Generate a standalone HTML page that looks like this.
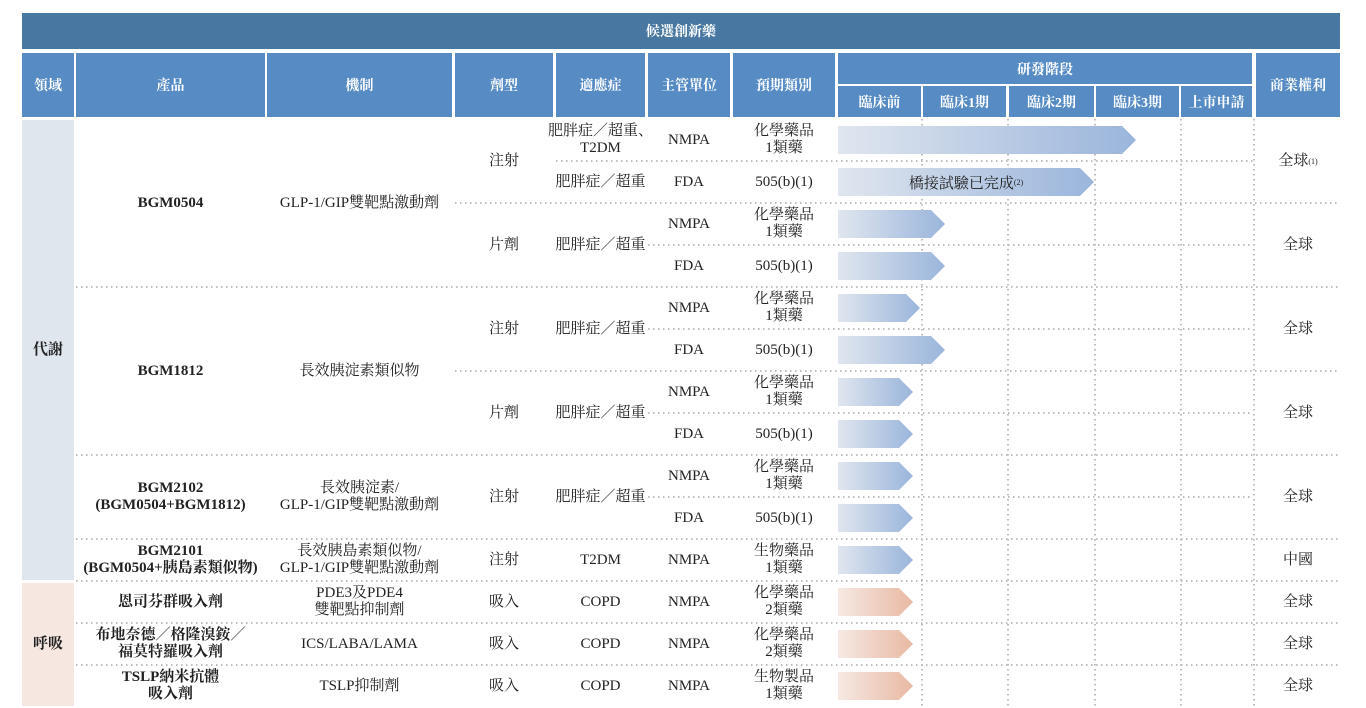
<!DOCTYPE html>
<html><head><meta charset="utf-8"><style>
*{margin:0;padding:0;box-sizing:border-box}
body{width:1366px;height:708px;background:#fff;position:relative;overflow:hidden;font-family:"Liberation Serif","Noto Serif CJK SC",serif;font-size:15px;color:#222}
.h{position:absolute;background:#568bc4;color:#fff;font-weight:bold;display:flex;align-items:center;justify-content:center;text-align:center;font-size:14px}
.c{position:absolute;display:flex;align-items:center;justify-content:center;text-align:center;line-height:17px}
.b{font-weight:bold}
.hl{position:absolute;height:1.5px;background:repeating-linear-gradient(90deg,#bdbdbd 0 1.5px,transparent 1.5px 5px)}
.vl{position:absolute;width:1.5px;background:repeating-linear-gradient(180deg,#bdbdbd 0 1.5px,transparent 1.5px 5px)}
.ar{position:absolute;height:28px;clip-path:polygon(0 0,calc(100% - 14px) 0,100% 50%,calc(100% - 14px) 100%,0 100%);background:linear-gradient(90deg,#e0e6ef,#9ab5db);display:flex;align-items:center;justify-content:center;font-size:15px}
.or{background:linear-gradient(90deg,#f6e9e3,#e8b9a3)}
</style></head><body>
<div class="h" style="left:22px;top:13px;width:1318px;height:36px;background:#4878a1">候選創新藥</div>
<div class="h" style="left:22px;top:53px;width:52px;height:64px">領域</div>
<div class="h" style="left:76px;top:53px;width:189px;height:64px">產品</div>
<div class="h" style="left:267px;top:53px;width:185px;height:64px">機制</div>
<div class="h" style="left:455px;top:53px;width:98px;height:64px">劑型</div>
<div class="h" style="left:556px;top:53px;width:89px;height:64px">適應症</div>
<div class="h" style="left:648px;top:53px;width:82px;height:64px">主管單位</div>
<div class="h" style="left:733px;top:53px;width:102px;height:64px">預期類別</div>
<div class="h" style="left:838px;top:53px;width:414px;height:31px">研發階段</div>
<div class="h" style="left:838px;top:86px;width:83px;height:31px">臨床前</div>
<div class="h" style="left:923px;top:86px;width:83px;height:31px">臨床1期</div>
<div class="h" style="left:1009px;top:86px;width:85px;height:31px">臨床2期</div>
<div class="h" style="left:1096px;top:86px;width:83px;height:31px">臨床3期</div>
<div class="h" style="left:1181px;top:86px;width:71px;height:31px">上市申請</div>
<div class="h" style="left:1256px;top:53px;width:84px;height:64px">商業權利</div>

<div class="c b" style="left:22px;top:120px;width:52px;height:460px;background:#dfe6ee">代謝</div>
<div class="c b" style="left:22px;top:583px;width:52px;height:123px;background:#f6e7e0">呼吸</div>

<div class="vl" style="left:921px;top:119px;height:588px"></div>
<div class="vl" style="left:1007px;top:119px;height:588px"></div>
<div class="vl" style="left:1094px;top:119px;height:588px"></div>
<div class="vl" style="left:1180px;top:119px;height:588px"></div>
<div class="vl" style="left:1253px;top:119px;height:588px"></div>

<div class="hl" style="left:556px;top:160px;width:697px"></div>
<div class="hl" style="left:455px;top:202px;width:885px"></div>
<div class="hl" style="left:648px;top:244px;width:605px"></div>
<div class="hl" style="left:76px;top:286px;width:1264px"></div>
<div class="hl" style="left:648px;top:328px;width:605px"></div>
<div class="hl" style="left:455px;top:370px;width:885px"></div>
<div class="hl" style="left:648px;top:412px;width:605px"></div>
<div class="hl" style="left:76px;top:454px;width:1264px"></div>
<div class="hl" style="left:648px;top:496px;width:605px"></div>
<div class="hl" style="left:76px;top:538px;width:1264px"></div>
<div class="hl" style="left:76px;top:580px;width:1264px"></div>
<div class="hl" style="left:76px;top:622px;width:1264px"></div>
<div class="hl" style="left:76px;top:664px;width:1264px"></div>

<div class="c b" style="left:76px;top:119px;width:189px;height:168px">BGM0504</div>
<div class="c" style="left:267px;top:119px;width:185px;height:168px">GLP-1/GIP雙靶點激動劑</div>
<div class="c b" style="left:76px;top:287px;width:189px;height:168px">BGM1812</div>
<div class="c" style="left:267px;top:287px;width:185px;height:168px">長效胰淀素類似物</div>
<div class="c b" style="left:76px;top:455px;width:189px;height:84px">BGM2102<br>(BGM0504+BGM1812)</div>
<div class="c" style="left:267px;top:455px;width:185px;height:84px">長效胰淀素/<br>GLP-1/GIP雙靶點激動劑</div>
<div class="c b" style="left:70px;top:539px;width:201px;height:42px">BGM2101<br>(BGM0504+胰島素類似物)</div>
<div class="c" style="left:262px;top:539px;width:195px;height:42px">長效胰島素類似物/<br>GLP-1/GIP雙靶點激動劑</div>
<div class="c b" style="left:76px;top:581px;width:189px;height:42px">恩司芬群吸入劑</div>
<div class="c" style="left:267px;top:581px;width:185px;height:42px">PDE3及PDE4<br>雙靶點抑制劑</div>
<div class="c b" style="left:76px;top:623px;width:189px;height:42px">布地奈德／格隆溴銨／<br>福莫特羅吸入劑</div>
<div class="c" style="left:267px;top:623px;width:185px;height:42px">ICS/LABA/LAMA</div>
<div class="c b" style="left:76px;top:665px;width:189px;height:42px">TSLP納米抗體<br>吸入劑</div>
<div class="c" style="left:267px;top:665px;width:185px;height:42px">TSLP抑制劑</div>

<div class="c" style="left:455px;top:119px;width:98px;height:84px">注射</div>
<div class="c" style="left:455px;top:203px;width:98px;height:84px">片劑</div>
<div class="c" style="left:455px;top:287px;width:98px;height:84px">注射</div>
<div class="c" style="left:455px;top:371px;width:98px;height:84px">片劑</div>
<div class="c" style="left:455px;top:455px;width:98px;height:84px">注射</div>
<div class="c" style="left:455px;top:539px;width:98px;height:42px">注射</div>
<div class="c" style="left:455px;top:581px;width:98px;height:42px">吸入</div>
<div class="c" style="left:455px;top:623px;width:98px;height:42px">吸入</div>
<div class="c" style="left:455px;top:665px;width:98px;height:42px">吸入</div>

<div class="c" style="left:541px;top:119px;width:119px;height:42px">肥胖症／超重、<br>T2DM</div>
<div class="c" style="left:541px;top:161px;width:119px;height:42px">肥胖症／超重</div>
<div class="c" style="left:541px;top:203px;width:119px;height:84px">肥胖症／超重</div>
<div class="c" style="left:541px;top:287px;width:119px;height:84px">肥胖症／超重</div>
<div class="c" style="left:541px;top:371px;width:119px;height:84px">肥胖症／超重</div>
<div class="c" style="left:541px;top:455px;width:119px;height:84px">肥胖症／超重</div>
<div class="c" style="left:541px;top:539px;width:119px;height:42px">T2DM</div>
<div class="c" style="left:541px;top:581px;width:119px;height:42px">COPD</div>
<div class="c" style="left:541px;top:623px;width:119px;height:42px">COPD</div>
<div class="c" style="left:541px;top:665px;width:119px;height:42px">COPD</div>

<div class="c" style="left:648px;top:119px;width:82px;height:42px">NMPA</div><div class="c" style="left:733px;top:119px;width:102px;height:42px">化學藥品<br>1類藥</div>
<div class="c" style="left:648px;top:161px;width:82px;height:42px">FDA</div><div class="c" style="left:733px;top:161px;width:102px;height:42px">505(b)(1)</div>
<div class="c" style="left:648px;top:203px;width:82px;height:42px">NMPA</div><div class="c" style="left:733px;top:203px;width:102px;height:42px">化學藥品<br>1類藥</div>
<div class="c" style="left:648px;top:245px;width:82px;height:42px">FDA</div><div class="c" style="left:733px;top:245px;width:102px;height:42px">505(b)(1)</div>
<div class="c" style="left:648px;top:287px;width:82px;height:42px">NMPA</div><div class="c" style="left:733px;top:287px;width:102px;height:42px">化學藥品<br>1類藥</div>
<div class="c" style="left:648px;top:329px;width:82px;height:42px">FDA</div><div class="c" style="left:733px;top:329px;width:102px;height:42px">505(b)(1)</div>
<div class="c" style="left:648px;top:371px;width:82px;height:42px">NMPA</div><div class="c" style="left:733px;top:371px;width:102px;height:42px">化學藥品<br>1類藥</div>
<div class="c" style="left:648px;top:413px;width:82px;height:42px">FDA</div><div class="c" style="left:733px;top:413px;width:102px;height:42px">505(b)(1)</div>
<div class="c" style="left:648px;top:455px;width:82px;height:42px">NMPA</div><div class="c" style="left:733px;top:455px;width:102px;height:42px">化學藥品<br>1類藥</div>
<div class="c" style="left:648px;top:497px;width:82px;height:42px">FDA</div><div class="c" style="left:733px;top:497px;width:102px;height:42px">505(b)(1)</div>
<div class="c" style="left:648px;top:539px;width:82px;height:42px">NMPA</div><div class="c" style="left:733px;top:539px;width:102px;height:42px">生物藥品<br>1類藥</div>
<div class="c" style="left:648px;top:581px;width:82px;height:42px">NMPA</div><div class="c" style="left:733px;top:581px;width:102px;height:42px">化學藥品<br>2類藥</div>
<div class="c" style="left:648px;top:623px;width:82px;height:42px">NMPA</div><div class="c" style="left:733px;top:623px;width:102px;height:42px">化學藥品<br>2類藥</div>
<div class="c" style="left:648px;top:665px;width:82px;height:42px">NMPA</div><div class="c" style="left:733px;top:665px;width:102px;height:42px">生物製品<br>1類藥</div>

<div class="ar" style="left:838px;top:126px;width:298px"></div>
<div class="ar" style="left:838px;top:168px;width:256px">橋接試驗已完成<sup style="font-size:8px">(2)</sup></div>
<div class="ar" style="left:838px;top:210px;width:107px"></div>
<div class="ar" style="left:838px;top:252px;width:107px"></div>
<div class="ar" style="left:838px;top:294px;width:82px"></div>
<div class="ar" style="left:838px;top:336px;width:107px"></div>
<div class="ar" style="left:838px;top:378px;width:75px"></div>
<div class="ar" style="left:838px;top:420px;width:75px"></div>
<div class="ar" style="left:838px;top:462px;width:75px"></div>
<div class="ar" style="left:838px;top:504px;width:75px"></div>
<div class="ar" style="left:838px;top:546px;width:75px"></div>
<div class="ar or" style="left:838px;top:588px;width:75px"></div>
<div class="ar or" style="left:838px;top:630px;width:75px"></div>
<div class="ar or" style="left:838px;top:672px;width:75px"></div>

<div class="c" style="left:1256px;top:119px;width:84px;height:84px">全球<sup style="font-size:8px">(1)</sup></div>
<div class="c" style="left:1256px;top:203px;width:84px;height:84px">全球</div>
<div class="c" style="left:1256px;top:287px;width:84px;height:84px">全球</div>
<div class="c" style="left:1256px;top:371px;width:84px;height:84px">全球</div>
<div class="c" style="left:1256px;top:455px;width:84px;height:84px">全球</div>
<div class="c" style="left:1256px;top:539px;width:84px;height:42px">中國</div>
<div class="c" style="left:1256px;top:581px;width:84px;height:42px">全球</div>
<div class="c" style="left:1256px;top:623px;width:84px;height:42px">全球</div>
<div class="c" style="left:1256px;top:665px;width:84px;height:42px">全球</div>
</body></html>
